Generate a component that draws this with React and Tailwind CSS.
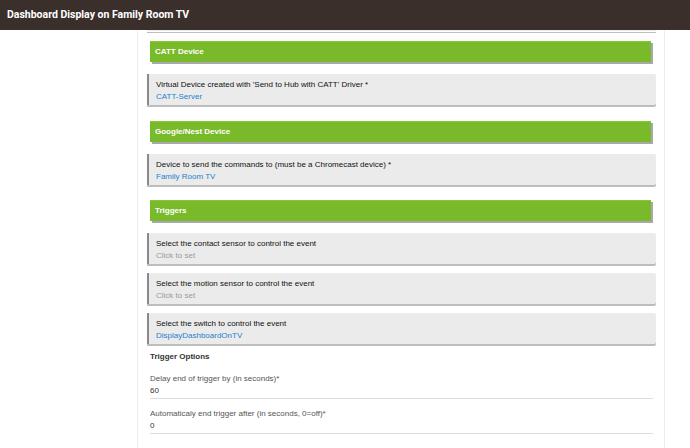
import React from 'react';

// section bar in the app settings page
const SectionHeader = ({ title }) => (
    <div className="ml-[3px] mr-[5px] h-[21px] bg-[#79ba2a] border-t border-[#86c63a] shadow-[2px_2px_0_#a8a8a8] flex items-center px-[5px]">
        <span className="text-[8px] font-bold text-white">{title}</span>
    </div>
);

// input card: label on top, value / placeholder below
const InputCard = ({ label, value, muted }) => (
    <div className="bg-[#ebebeb] border-l-2 border-[#8a8a8a] shadow-[0_2px_0_#bdbdbd] rounded-r-[2px] h-[31px] px-[7px] pt-[5px] leading-[12px] text-[8px]">
        <div className="text-[#111]">{label}</div>
        <div className={muted ? 'text-[#9a9a9a]' : 'text-[#1e7fcf]'}>{value}</div>
    </div>
);

const NumberField = ({ label, value }) => (
    <div className="mx-[3px] border-b border-[#dcdcdc] text-[8px] leading-[12px] pb-[1px]">
        <div className="text-[#555]">{label}</div>
        <div className="text-[#333]">{value}</div>
    </div>
);

export default function App() {
    return (
        <div className="w-[690px] h-[448px] overflow-hidden bg-white font-['Liberation_Sans',Arial,sans-serif]">
            <div className="h-[30px] bg-[#3b2f2c] flex items-center px-[7px]">
                <span className="text-white text-[10.5px] font-bold font-['Roboto',sans-serif]">Dashboard Display on Family Room TV</span>
            </div>

            <div className="flex h-[418px]">
                <div className="w-[137px] shrink-0" />
                <div className="w-[528px] border-l border-r border-[#ededed] pl-[9px] pr-[8px]">
                    {/* tail of the card above */}
                    <div className="h-[1px] bg-[#ebebeb] shadow-[0_2px_0_#bdbdbd]" />

                    <div className="mt-[10px]">
                        <SectionHeader title="CATT Device" />
                    </div>
                    <div className="mt-[12px]">
                        <InputCard label="Virtual Device created with 'Send to Hub with CATT' Driver *" value="CATT-Server" />
                    </div>

                    <div className="mt-[16px]">
                        <SectionHeader title="Google/Nest Device" />
                    </div>
                    <div className="mt-[12px]">
                        <InputCard label="Device to send the commands to (must be a Chromecast device) *" value="Family Room TV" />
                    </div>

                    <div className="mt-[15px]">
                        <SectionHeader title="Triggers" />
                    </div>
                    <div className="mt-[12px] flex flex-col gap-[9px]">
                        <InputCard label="Select the contact sensor to control the event" value="Click to set" muted />
                        <InputCard label="Select the motion sensor to control the event" value="Click to set" muted />
                        <InputCard label="Select the switch to control the event" value="DisplayDashboardOnTV" />
                    </div>

                    <div className="mt-[7px] mx-[3px] text-[8px] font-bold text-[#333] leading-[12px]">Trigger Options</div>

                    <div className="mt-[10px]">
                        <NumberField label="Delay end of trigger by (in seconds)*" value="60" />
                    </div>
                    <div className="mt-[9px]">
                        <NumberField label="Automaticaly end trigger after (in seconds, 0=off)*" value="0" />
                    </div>
                </div>
            </div>
        </div>
    );
}
